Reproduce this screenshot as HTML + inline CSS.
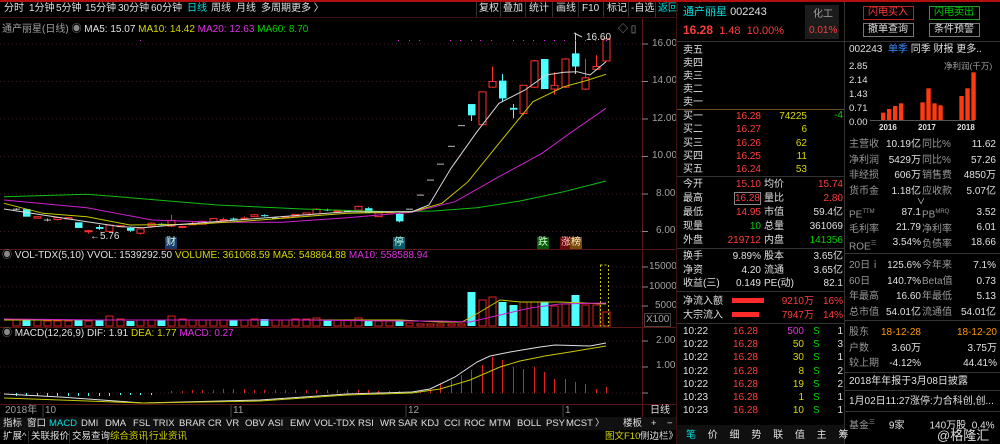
<!DOCTYPE html>
<html><head><meta charset="utf-8">
<style>
*{margin:0;padding:0;box-sizing:border-box}
body{width:1000px;height:444px;background:#000;overflow:hidden;position:relative;font-family:"Liberation Sans","Noto Sans CJK SC",sans-serif;font-size:10px;color:#c8c8c8}
.a{position:absolute;white-space:nowrap;line-height:12px}
.r{text-align:right}
.t{position:absolute;white-space:nowrap;font-size:10px;line-height:12px;color:#e0e0e0}
.tb{position:absolute;white-space:nowrap;font-size:9.5px;line-height:12px;color:#e0e0e0}
.red{color:#ff3c3c !important}.cy{color:#00e0e0 !important}.yel{color:#d8d800 !important}.grn{color:#00d000 !important}.mag{color:#e030e0 !important}.wh{color:#e0e0e0}.gr{color:#a0a0a0}.org{color:#ff9900 !important}
.hl{position:absolute;height:1px;background:#333}
.vl{position:absolute;width:1px;background:#333}
.d{position:absolute;width:1px;background:#333}
</style></head><body>
<div style="position:absolute;left:0;top:0;width:1000px;height:2px;background:#b01010"></div>
<!-- toolbar -->
<div class="t" style="left:4px;top:3px">分时</div>
<div class="t" style="left:29px;top:3px">1分钟</div>
<div class="t" style="left:56px;top:3px">5分钟</div>
<div class="t" style="left:85px;top:3px">15分钟</div>
<div class="t" style="left:118px;top:3px">30分钟</div>
<div class="t" style="left:151px;top:3px">60分钟</div>
<div class="t cy" style="left:187px;top:3px">日线</div>
<div class="t" style="left:211px;top:3px">周线</div>
<div class="t" style="left:236px;top:3px">月线</div>
<div class="t" style="left:261px;top:3px">多周期</div>
<div class="t" style="left:291px;top:3px">更多 〉</div>
<div class="t" style="left:479px;top:3px">复权</div>
<div class="t" style="left:503px;top:3px">叠加</div>
<div class="t" style="left:529px;top:3px">统计</div>
<div class="t" style="left:556px;top:3px">画线</div>
<div class="t" style="left:582px;top:3px">F10</div>
<div class="t" style="left:607px;top:3px">标记</div>
<div class="t" style="left:631px;top:3px">-自选</div>
<div class="t cy" style="left:658px;top:3px">返回</div>
<div class="d" style="left:476px;top:2px;height:15px"></div><div class="d" style="left:500px;top:2px;height:15px"></div><div class="d" style="left:525px;top:2px;height:15px"></div><div class="d" style="left:552px;top:2px;height:15px"></div><div class="d" style="left:578px;top:2px;height:15px"></div><div class="d" style="left:603px;top:2px;height:15px"></div><div class="d" style="left:628px;top:2px;height:15px"></div><div class="d" style="left:655px;top:2px;height:15px"></div>
<div class="hl" style="left:0;top:17px;width:676px;background:#3a1010"></div>
<!-- chart header -->
<div class="a" style="left:2px;top:24px;font-size:10px"><span class="gr">通产丽星(日线)</span> <span style="color:#888">◉</span> <span class="wh">MA5: 15.07</span> <span class="yel">MA10: 14.42</span> <span class="mag">MA20: 12.63</span> <span class="grn">MA60: 8.70</span></div>
<div class="a gr" style="left:618px;top:24px">◇ ▯</div>
<svg id="ch" width="676" height="444" style="position:absolute;left:0;top:0"></svg>
<!-- axis labels -->
<div class="a gr" style="left:652px;top:38px">16.00</div>
<div class="a gr" style="left:652px;top:75px">14.00</div>
<div class="a gr" style="left:652px;top:113px">12.00</div>
<div class="a gr" style="left:652px;top:150px">10.00</div>
<div class="a gr" style="left:656px;top:188px">8.00</div>
<div class="a gr" style="left:656px;top:225px">6.00</div>
<div class="a wh" style="left:586px;top:32px">16.60</div>
<div class="a wh" style="left:90px;top:231px">←5.76</div>
<div class="a" style="left:165px;top:237px;background:#1a3a6a;color:#cfe;padding:0 1px">财</div>
<div class="a" style="left:393px;top:237px;background:#0a5a6a;color:#cfe;padding:0 1px">停</div>
<div class="a" style="left:537px;top:237px;background:#0a5a0a;color:#cfc;padding:0 1px">跌</div>
<div class="a" style="left:560px;top:237px;background:#6a0a0a;color:#fcc;padding:0 1px">涨</div>
<div class="a" style="left:570px;top:237px;background:#7a4a0a;color:#fec;padding:0 1px">榜</div>
<div class="a" style="left:2px;top:250px"><span style="color:#888">◉</span> <span class="wh">VOL-TDX(5,10)</span> <span class="wh">VVOL: 1539292.50</span> <span class="yel">VOLUME: 361068.59</span> <span class="yel">MA5: 548864.88</span> <span class="mag">MA10: 558588.94</span></div>
<div class="a gr" style="left:649px;top:261px">15000</div>
<div class="a gr" style="left:649px;top:281px">10000</div>
<div class="a gr" style="left:655px;top:300px">5000</div>
<div class="a gr" style="left:644px;top:313px;border:1px solid #444;padding:0 1px">X100</div>
<div class="a" style="left:2px;top:328px"><span style="color:#888">◉</span> <span class="wh">MACD(12,26,9)</span> <span class="wh">DIF: 1.91</span> <span class="yel">DEA: 1.77</span> <span class="mag">MACD: 0.27</span></div>
<div class="a gr" style="left:656px;top:335px">2.00</div>
<div class="a gr" style="left:656px;top:360px">1.00</div>
<!-- date axis -->
<div class="a gr" style="left:5px;top:405px">2018年</div>
<div class="a gr" style="left:45px;top:405px">10</div>
<div class="a gr" style="left:233px;top:405px">11</div>
<div class="a gr" style="left:408px;top:405px">12</div>
<div class="a gr" style="left:565px;top:405px">1</div>
<div class="a wh" style="left:650px;top:405px">日线</div>
<div style="position:absolute;left:0;top:417px;width:676px;height:13px;background:#101010"></div>
<div class="tb" style="left:3px;top:418px">指标</div>
<div class="tb" style="left:27px;top:418px">窗口</div>
<div class="tb cy" style="left:49px;top:418px">MACD</div>
<div class="tb" style="left:81px;top:418px">DMI</div>
<div class="tb" style="left:105px;top:418px">DMA</div>
<div class="tb" style="left:133px;top:418px">FSL</div>
<div class="tb" style="left:153px;top:418px">TRIX</div>
<div class="tb" style="left:179px;top:418px">BRAR</div>
<div class="tb" style="left:208px;top:418px">CR</div>
<div class="tb" style="left:226px;top:418px">VR</div>
<div class="tb" style="left:245px;top:418px">OBV</div>
<div class="tb" style="left:268px;top:418px">ASI</div>
<div class="tb" style="left:290px;top:418px">EMV</div>
<div class="tb" style="left:314px;top:418px">VOL-TDX</div>
<div class="tb" style="left:358px;top:418px">RSI</div>
<div class="tb" style="left:380px;top:418px">WR</div>
<div class="tb" style="left:398px;top:418px">SAR</div>
<div class="tb" style="left:421px;top:418px">KDJ</div>
<div class="tb" style="left:444px;top:418px">CCI</div>
<div class="tb" style="left:464px;top:418px">ROC</div>
<div class="tb" style="left:489px;top:418px">MTM</div>
<div class="tb" style="left:517px;top:418px">BOLL</div>
<div class="tb" style="left:546px;top:418px">PSY</div>
<div class="tb" style="left:566px;top:418px">MCST</div>
<div class="tb" style="left:595px;top:418px">〉</div>
<div class="tb" style="left:623px;top:418px">楼板</div>
<div class="tb" style="left:651px;top:418px">+</div>
<div class="tb" style="left:667px;top:418px">−</div>
<div class="tb" style="left:3px;top:431px">扩展^</div>
<div class="tb" style="left:31px;top:431px">关联报价</div>
<div class="tb" style="left:72px;top:431px">交易查询</div>
<div class="tb yel" style="left:110px;top:431px">综合资讯</div>
<div class="tb yel" style="left:149px;top:431px">行业资讯</div>
<div class="tb yel" style="left:605px;top:431px">图文F10</div><div class="tb" style="left:640px;top:431px">侧边栏》</div>
<!-- right panel -->
<div class="vl" style="left:676px;top:2px;height:442px;background:#3a1010"></div>
<div class="vl" style="left:844px;top:2px;height:442px"></div>
<div class="a" style="left:683px;top:6px;font-size:11px"><span class="cy">通产丽星</span> <span class="wh">002243</span></div>
<div class="a red" style="left:683px;top:24px;font-size:11px"><b style="font-size:12px">16.28</b> &nbsp;1.48 &nbsp;10.00%</div>
<div style="position:absolute;left:805px;top:5px;width:34px;height:34px;background:#1c1c1c"></div>
<div class="a gr" style="left:813px;top:9px">化工</div>
<div class="a red" style="left:809px;top:25px">0.01%</div>
<div class="hl" style="left:677px;top:41px;width:323px"></div>
<div class="a wh" style="left:683px;top:44px;line-height:13px">卖五<br>卖四<br>卖三<br>卖二<br>卖一</div>
<div class="hl" style="left:677px;top:109px;width:167px;background:#6a4a20"></div>
<div class="a wh" style="left:683px;top:110px;line-height:13.3px">买一<br>买二<br>买三<br>买四<br>买五</div>
<div class="a red r" style="left:720px;top:110px;width:41px;line-height:13.3px">16.28<br>16.27<br>16.26<br>16.25<br>16.24</div>
<div class="a yel r" style="left:770px;top:110px;width:37px;line-height:13.3px">74225<br>6<br>62<br>11<br>53</div>
<div class="a grn r" style="left:820px;top:110px;width:23px">-4</div>
<div class="hl" style="left:677px;top:176px;width:167px"></div>
<div class="a wh" style="left:683px;top:178px;line-height:14px">今开<br>最高<br>最低<br>现量<br>外盘</div>
<div class="a r" style="left:715px;top:178px;width:46px;line-height:14px"><span class="red">15.10</span><br><span class="red" style="border:1px solid #888">16.28</span><br><span class="red">14.95</span><br><span class="grn">10</span><br><span class="red">219712</span></div>
<div class="a wh" style="left:764px;top:178px;line-height:14px">均价<br>量比<br>市值<br>总量<br>内盘</div>
<div class="a r" style="left:795px;top:178px;width:48px;line-height:14px"><span class="red">15.74</span><br><span class="red">2.80</span><br><span class="wh">59.4亿</span><br><span class="wh">361069</span><br><span class="grn">141356</span></div>
<div class="hl" style="left:677px;top:248px;width:167px"></div>
<div class="a wh" style="left:683px;top:250px;line-height:13.5px">换手<br>净资<br>收益(三)</div>
<div class="a wh r" style="left:715px;top:250px;width:46px;line-height:13.5px">9.89%<br>4.20<br>0.149</div>
<div class="a wh" style="left:764px;top:250px;line-height:13.5px">股本<br>流通<br>PE(动)</div>
<div class="a wh r" style="left:795px;top:250px;width:48px;line-height:13.5px">3.65亿<br>3.65亿<br>82.1</div>
<div class="hl" style="left:677px;top:291px;width:167px"></div>
<div class="a wh" style="left:683px;top:295px;line-height:13.5px">净流入额<br>大宗流入</div>
<div style="position:absolute;left:732px;top:298px;width:32px;height:5px;background:#ff2a2a"></div>
<div style="position:absolute;left:732px;top:312px;width:27px;height:5px;background:#ff2a2a"></div>
<div class="a red r" style="left:770px;top:295px;width:44px;line-height:13.5px">9210万<br>7947万</div>
<div class="a red r" style="left:815px;top:295px;width:28px;line-height:13.5px">16%<br>14%</div>
<div class="hl" style="left:677px;top:323px;width:167px"></div>
<div class="a wh" style="left:683px;top:325px;line-height:13.2px">10:22<br>10:22<br>10:22<br>10:22<br>10:22<br>10:23<br>10:23</div>
<div class="a red r" style="left:720px;top:325px;width:38px;line-height:13.2px">16.28<br>16.28<br>16.28<br>16.28<br>16.28<br>16.28<br>16.28</div>
<div class="a yel r" style="left:770px;top:325px;width:34px;line-height:13.2px"><span class="mag">500</span><br>50<br>30<br>8<br>19<br>1<br>10</div>
<div class="a grn" style="left:813px;top:325px;line-height:13.2px">S<br>S<br>S<br>S<br>S<br>S<br>S</div>
<div class="a wh r" style="left:825px;top:325px;width:18px;line-height:13.2px">1<br>3<br>1<br>2<br>2<br>1<br>1</div>
<div style="position:absolute;left:677px;top:425px;width:167px;height:19px;background:#101010"></div>
<div class="a wh" style="left:686px;top:430px;word-spacing:9px"><span class="cy">笔</span> 价 细 势 联 值 主 筹</div>
<!-- far right -->
<div style="position:absolute;left:863px;top:6px;width:51px;height:14px;border:1px solid #c02020"></div>
<div class="a red" style="left:868px;top:7px">闪电买入</div>
<div style="position:absolute;left:929px;top:6px;width:51px;height:14px;border:1px solid #20a020"></div>
<div class="a grn" style="left:934px;top:7px">闪电卖出</div>
<div style="position:absolute;left:863px;top:23px;width:51px;height:14px;border:1px solid #777"></div>
<div class="a wh" style="left:868px;top:24px">撤单查询</div>
<div style="position:absolute;left:929px;top:23px;width:51px;height:14px;border:1px solid #777"></div>
<div class="a wh" style="left:934px;top:24px">条件预警</div>
<div class="a wh" style="left:849px;top:44px">002243 &nbsp;<span style="color:#3a8aff">单季</span> 同季 财报 更多..</div>
<div class="a wh" style="left:849px;top:60px;line-height:14px;font-size:9.5px">2.85<br>2.14<br>1.43<br>0.71<br>0.00</div>
<div class="a gr" style="left:944px;top:60px;font-size:8.5px">净利润(千万)</div>
<div class="a wh" style="left:879px;top:122px;font-size:8px"><b>2016</b></div>
<div class="a wh" style="left:918px;top:122px;font-size:8px"><b>2017</b></div>
<div class="a wh" style="left:957px;top:122px;font-size:8px"><b>2018</b></div>
<div class="a" style="left:849px;top:137px;line-height:15.5px;color:#999">主营收<br>净利润<br>非经损<br>货币金</div>
<div class="a wh r" style="left:870px;top:137px;width:51px;line-height:15.5px">10.19亿<br>5429万<br>606万<br>1.18亿</div>
<div class="a" style="left:922px;top:137px;line-height:15.5px;color:#999">同比%<br>同比%<br>销售费<br>应收款</div>
<div class="a wh r" style="left:945px;top:137px;width:51px;line-height:15.5px">11.62<br>57.26<br>4850万<br>5.07亿</div>
<div class="a wh" style="left:917px;top:196px;font-size:8px">∨</div>
<div class="a" style="left:849px;top:205px;line-height:15px;color:#999">PE<sup style="font-size:6px">TTM</sup><br>毛利率<br>ROE<sup style="font-size:6px">三</sup></div>
<div class="a wh r" style="left:870px;top:205px;width:51px;line-height:15px">87.1<br>21.79<br>3.54%</div>
<div class="a" style="left:922px;top:205px;line-height:15px;color:#999">PB<sup style="font-size:6px">MRQ</sup><br>净利率<br>负债率</div>
<div class="a wh r" style="left:945px;top:205px;width:51px;line-height:15px">3.52<br>6.01<br>18.66</div>
<div class="hl" style="left:845px;top:253px;width:155px"></div>
<div class="a" style="left:849px;top:258px;line-height:15.5px;color:#999">20日ⅰ<br>60日<br>年最高<br>总市值</div>
<div class="a wh r" style="left:870px;top:258px;width:51px;line-height:15.5px">125.6%<br>140.7%<br>16.60<br>54.01亿</div>
<div class="a" style="left:922px;top:258px;line-height:15.5px;color:#999">今年来<br>Beta值<br>年最低<br>流通值</div>
<div class="a wh r" style="left:945px;top:258px;width:51px;line-height:15.5px">7.1%<br>0.73<br>5.13<br>54.01亿</div>
<div class="hl" style="left:845px;top:320px;width:155px"></div>
<div class="a" style="left:849px;top:325px;line-height:15.5px;color:#999">股东<br>户数<br>较上期</div>
<div class="a r" style="left:870px;top:325px;width:51px;line-height:15.5px"><span class="org">18-12-28</span><br><span class="wh">3.60万</span><br><span class="wh">-4.12%</span></div>
<div class="a r" style="left:935px;top:325px;width:62px;line-height:15.5px"><span class="org">18-12-20</span><br><span class="wh">3.75万</span><br><span class="wh">44.41%</span></div>
<div class="hl" style="left:845px;top:372px;width:155px"></div>
<div class="a wh" style="left:849px;top:376px">2018年年报于3月08日披露</div>
<div class="hl" style="left:845px;top:390px;width:155px"></div>
<div class="a wh" style="left:849px;top:396px">1月02日11:27涨停:力合科创,创...</div>
<div class="hl" style="left:845px;top:411px;width:155px"></div>
<div class="a" style="left:849px;top:417px;color:#999">基金<sup style="font-size:6px">三</sup> &nbsp; &nbsp; <span class="wh">9家</span> &nbsp; &nbsp; &nbsp; &nbsp; <span class="wh">140万股 &nbsp;0.4%</span></div>
<div class="a" style="left:937px;top:428px;color:#ddd;font-size:13px;line-height:15px">@格隆汇</div>
<svg width="1000" height="444" style="position:absolute;left:0;top:0" id="fin"></svg>
<script>
var S='';
function L(x1,y1,x2,y2,c,d){S+='<line x1="'+x1+'" y1="'+y1+'" x2="'+x2+'" y2="'+y2+'" stroke="'+c+'" stroke-width="1"'+(d?' stroke-dasharray="'+d+'"':'')+'/>';}
function R(x,y,w,h,f,s){S+='<rect x="'+x+'" y="'+y+'" width="'+w+'" height="'+h+'" fill="'+(f||'none')+'"'+(s?' stroke="'+s+'"':'')+'/>';}
function P(pts,c){S+='<polyline fill="none" stroke="'+c+'" stroke-width="1" points="'+pts+'"/>';}
L(0,249.5,676,249.5,'#5a1515');L(0,327.5,676,327.5,'#5a1515');L(0,404.5,676,404.5,'#5a1515');
L(642.5,18,642.5,417,'#5a1515');
[44,81.5,119,156.5,194,231.5].forEach(function(y){L(0,y,642,y,'#3a2020','1,3');L(642,y,648,y,'#888');});
[267,287,306].forEach(function(y){L(0,y,642,y,'#3a2020','1,3');L(642,y,648,y,'#888');});
[341,367,393].forEach(function(y){L(0,y,642,y,'#3a2020','1,3');L(642,y,648,y,'#888');});
[45,233,408,565].forEach(function(x){L(x-2,405,x-2,417,'#444');});
[25,47,79,103,131,151,177,206,224,243,266,288,312,356,378,396,419,442,462,487,515,544,564,593,621].forEach(function(x){L(x+0.5,418,x+0.5,429,'#333');});
[28,69,107,146].forEach(function(x){L(x+0.5,431,x+0.5,443,'#333');});
function Y(p){return 44+(16-p)*18.77;}
var C=[[7.2,7.2,7.25,7.15],[7.2,6.8,7.2,6.8],[6.72,6.8,6.82,6.7],[6.62,6.62,6.7,6.55],[6.65,6.75,6.8,6.6],[6.68,6.75,6.78,6.65],[6.5,6.2,6.5,6.2],[6.0,6.05,6.1,5.9],[6.25,6.15,6.35,6.1],[6.02,6.35,6.4,6.0],[6.28,6.32,6.35,6.25],[6.2,6.05,6.22,6.0],[5.92,6.15,6.18,5.85],[6.3,6.45,6.5,6.25],[6.42,6.35,6.45,6.3],[6.3,6.6,6.9,6.25],[6.25,6.28,6.3,6.2],[6.4,6.42,6.55,6.35],[6.4,6.55,6.6,6.38],[6.5,6.7,6.72,6.48],[6.62,6.65,6.75,6.58],[6.7,6.65,6.75,6.6],[6.68,6.72,6.8,6.65],[6.8,6.9,6.95,6.78],[6.88,6.85,6.92,6.8],[6.72,6.72,6.8,6.68],[6.75,6.78,6.8,6.7],[6.8,6.92,6.95,6.78],[6.9,7.0,7.02,6.88],[6.95,7.2,7.25,6.92],[7.18,7.15,7.22,7.1],[7.1,7.12,7.15,7.08],[7.1,7.1,7.12,7.05],[7.15,7.35,7.38,7.12],[7.25,7.0,7.3,6.98],[6.8,7.0,7.02,6.78],[7.05,7.06,7.1,7.0],[6.95,6.55,7.0,6.5],[7.2,7.2,7.2,7.2],[7.95,7.95,7.95,7.95],[8.75,8.75,8.75,8.75],[9.6,9.6,9.6,9.6],[10.55,10.55,10.55,10.55],[11.65,11.65,11.65,11.65],[12.8,12.2,12.8,11.9],[11.7,13.45,13.45,11.7],[13.7,14.0,14.8,13.7],[14.05,13.1,14.4,12.9],[12.6,12.5,12.8,12.05],[12.3,13.8,13.8,12.2],[13.7,15.1,15.15,13.65],[15.2,13.6,15.2,13.6],[13.6,13.8,14.5,13.3],[13.7,15.2,15.25,13.65],[15.5,14.8,16.6,14.4],[13.6,14.2,15.2,13.55],[14.65,14.8,15.4,14.6],[15.1,16.28,16.28,15.05]];
var vol=[6,6,6,5,5,5,6,5,6,10,7,5,6,6,6,10,7,6,6,6,6,6,6,7,7,6,6,7,7,8,6,6,6,8,6,5,5,5,3,2,2,2,2,2,34,26,29,24,21,24,24,24,20,22,31,21,21,14];
var mc=[-3,-3,-3,-3,-3,-3,-3,-3,-3,-3,-2,-2,-2,-2,0,2,2,3,3,3,4,4,4,3,3,3,3,3,3,3,3,3,3,3,3,2,2,2,1,1,3,9,13,18,23,28,36,33,26,24,26,21,14,14,11,9,4,6];
C.forEach(function(c,i){var x=Math.round(16+i*10.35)+0.5;var o=c[0],cl=c[1];var up=cl>o,eq=Math.abs(cl-o)<0.001;
 var col=eq?'#bbb':(up?'#ff3030':'#50ffff');
 var t=Y(Math.max(o,cl)),b=Y(Math.min(o,cl));
 L(x,Y(c[2]),x,t,col);L(x,b,x,Y(c[3]),col);
 if(eq){L(x-3.5,t,x+3.5,t,col);}else if(up){R(x-3.5,t,7,Math.max(b-t,1),'#000',col);}else{R(x-3.5,t,7.5,Math.max(b-t,1),col);}
 var vc=(up||eq)?'#ff3030':'#50ffff';var vh=vol[i];
 if(up||eq){R(x-3.5,326-vh,7,vh,'#000','#e02020');}else{R(x-4,326-vh,8,vh,vc);}
 var m=mc[i];if(m>0)L(x,393,x,393-m,'#e02020');else if(m<0)L(x,393,x,393-m,'#50ffff');
});
S+='<rect x="600.5" y="265" width="8" height="61" fill="none" stroke="#c8c800" stroke-dasharray="2,2"/>';
P('4,196.7 87,194.3 130,197.7 217,205 303,209 390,211.7 434,211 477,207.7 520,201 564,191.7 606,181','#10c010');
P('4,200 87,207.7 152,220 217,222.3 282,222.3 347,217.7 412,212.3 455,201.7 499,176.7 542,153.3 572,131.7 606,108.3','#d020d0');
P('4,203.3 43,213.3 87,216.7 130,225 195,224.3 260,220 347,213.3 412,211.7 442,203.3 468,181.7 499,143.3 533,101.7 564,86.7 585,81 606,74.3','#c8c800');
P('4,209 43,215 87,221.7 121,226.7 143,227.7 173,225 260,218.3 347,211.7 412,211.7 429,205 451,168.3 477,131.7 499,103.3 525,90 546,75 564,72.3 577,71.7 590,75 606,61.7','#d8d8d8');
P('4,320 100,320 200,320 300,320 400,320 440,322 462,322 480,312 500,300 520,302 560,302 606,304','#c8c800');
P('4,319 100,320 200,320 300,320 400,321 440,321 470,322 500,315 530,308 560,304 606,303','#d020d0');
P('4,394 60,397 143,403 260,400 347,394 412,392 430,389 455,377 477,362 490,356 510,352 540,347 555,345 590,346 606,343','#e0e0e0');
P('4,398 60,400 143,403 260,401 347,395 412,393 440,389 470,380 500,367 520,361 545,356 570,352 606,346','#c8c800');
L(574,33,582,37,'#ccc');
[322,918,943,967,1038,1060,1085,1108,1133,1182,1206,1230,1254,1278,1300,1325,1350,1372,1397].forEach(function(z){R(Math.round(z/2.306),40,1,1,'#e020e0');});
document.getElementById('ch').innerHTML=S;
var F='';
var bars=[[615,338],[633,327],[651,318],[669,310],[733,307],[751,265],[769,310],[787,316],[850,288],[868,265],[886,217]];
bars.forEach(function(b){var x=676+b[0]/3,y=b[1]/3;F+='<rect x="'+x+'" y="'+y+'" width="4.4" height="'+(120-y)+'" fill="#ff3a10"/>';});
F+='<line x1="870" y1="120.5" x2="975" y2="120.5" stroke="#555"/>';
document.getElementById('fin').innerHTML=F;
</script>
</body></html>
